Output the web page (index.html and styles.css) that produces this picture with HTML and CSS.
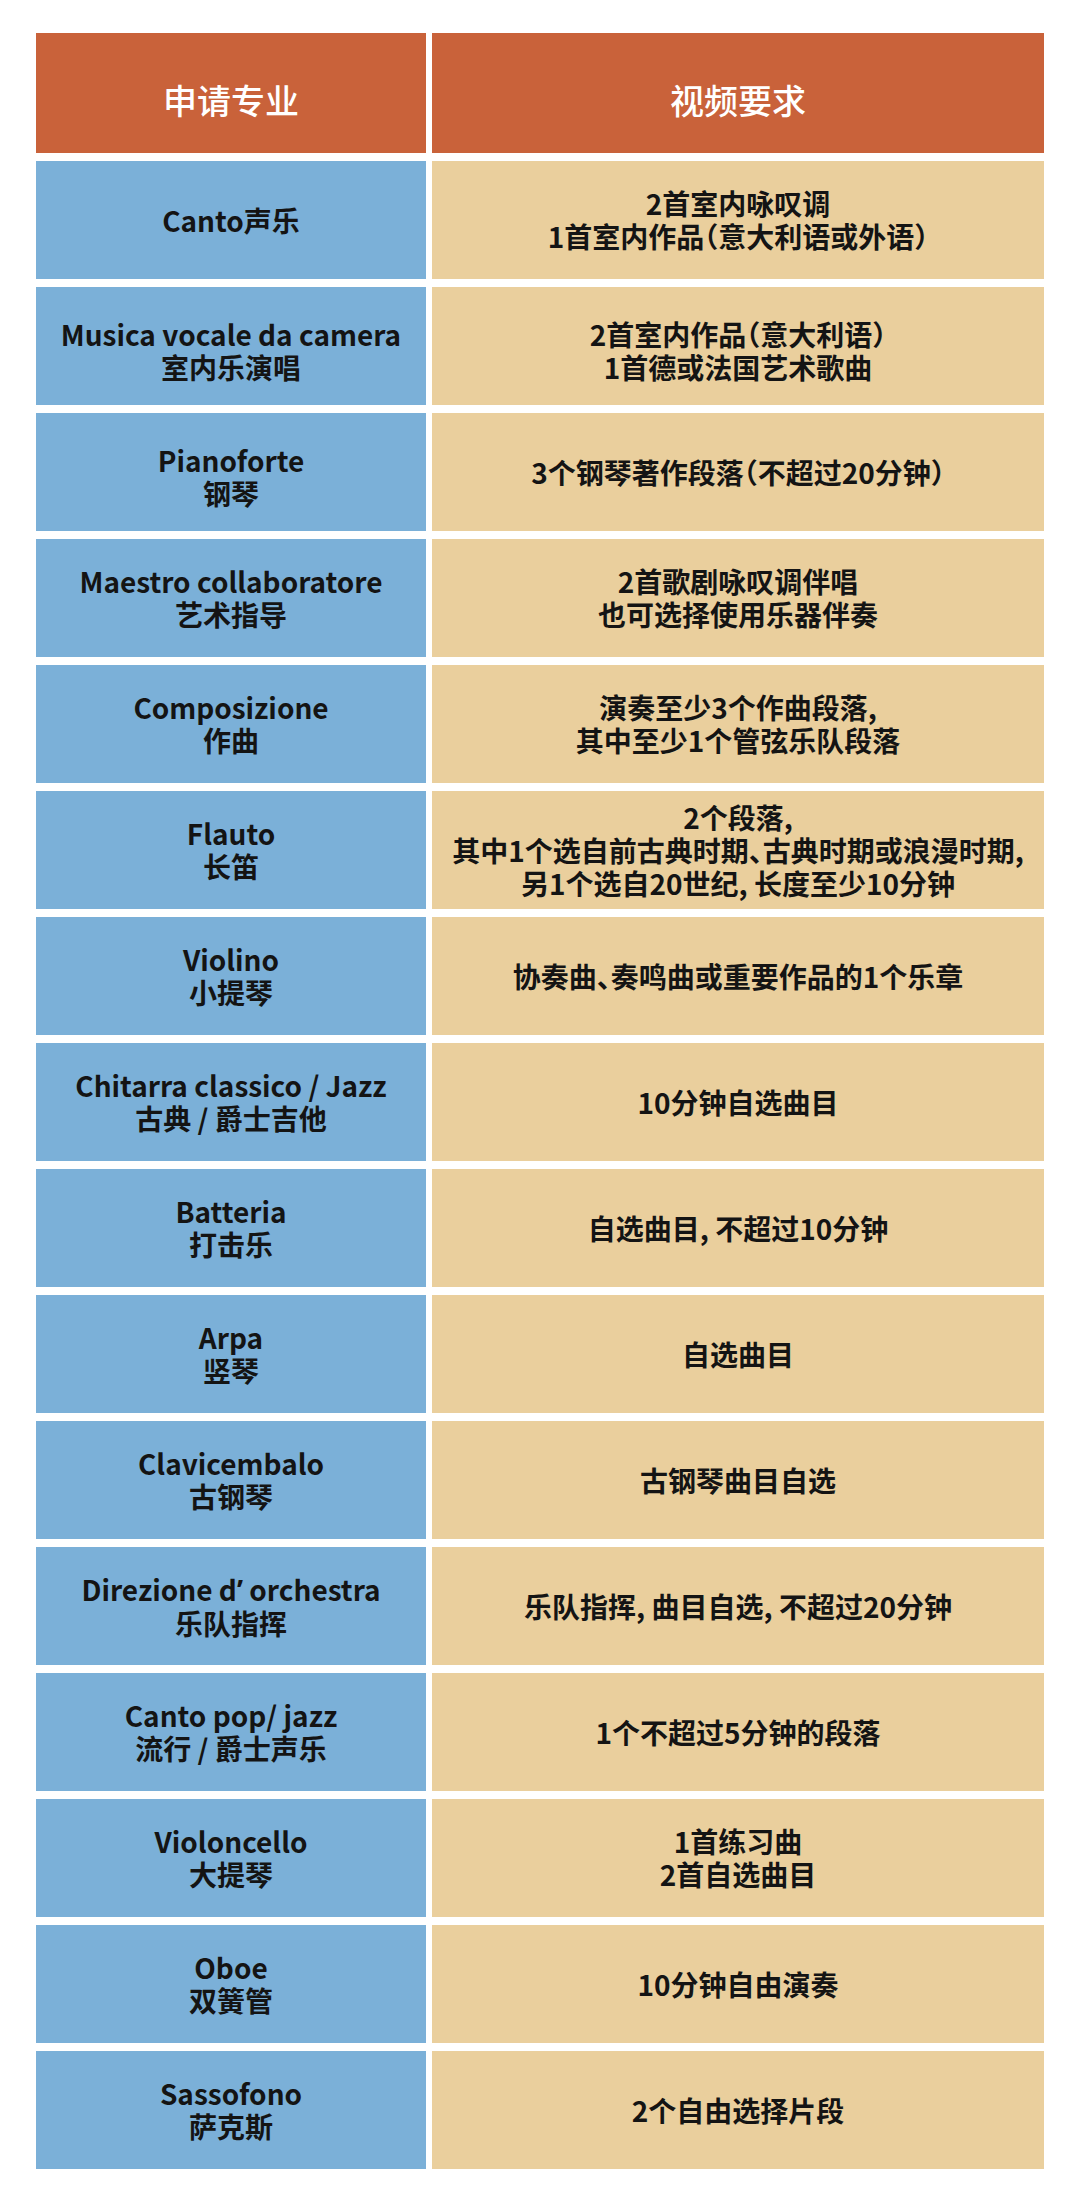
FILE: index.html
```html
<!DOCTYPE html>
<html lang="zh-CN">
<head>
<meta charset="utf-8">
<title>申请专业 视频要求</title>
<link rel="stylesheet" href="styles.css">
</head>
<body>
<div class="table">
  <div class="cell head"><p class="txt">申请专业</p></div>
  <div class="cell head"><p class="txt">视频要求</p></div>

  <div class="cell major"><p class="txt">Canto声乐</p></div>
  <div class="cell req"><p class="txt">2首室内咏叹调<br>1首室内作品（意大利语或外语）</p></div>

  <div class="cell major low"><p class="txt">Musica vocale da camera<br>室内乐演唱</p></div>
  <div class="cell req low"><p class="txt">2首室内作品（意大利语）<br>1首德或法国艺术歌曲</p></div>

  <div class="cell major low"><p class="txt">Pianoforte<br>钢琴</p></div>
  <div class="cell req"><p class="txt">3个钢琴著作段落（不超过20分钟）</p></div>

  <div class="cell major"><p class="txt">Maestro collaboratore<br>艺术指导</p></div>
  <div class="cell req"><p class="txt">2首歌剧咏叹调伴唱<br>也可选择使用乐器伴奏</p></div>

  <div class="cell major"><p class="txt">Composizione<br>作曲</p></div>
  <div class="cell req"><p class="txt">演奏至少3个作曲段落,<br>其中至少1个管弦乐队段落</p></div>

  <div class="cell major"><p class="txt">Flauto<br>长笛</p></div>
  <div class="cell req"><p class="txt">2个段落,<br>其中1个选自前古典时期、古典时期或浪漫时期,<br>另1个选自20世纪, 长度至少10分钟</p></div>

  <div class="cell major"><p class="txt">Violino<br>小提琴</p></div>
  <div class="cell req"><p class="txt">协奏曲、奏鸣曲或重要作品的1个乐章</p></div>

  <div class="cell major"><p class="txt">Chitarra classico / Jazz<br>古典 / 爵士吉他</p></div>
  <div class="cell req"><p class="txt">10分钟自选曲目</p></div>

  <div class="cell major"><p class="txt">Batteria<br>打击乐</p></div>
  <div class="cell req"><p class="txt">自选曲目, 不超过10分钟</p></div>

  <div class="cell major"><p class="txt">Arpa<br>竖琴</p></div>
  <div class="cell req"><p class="txt">自选曲目</p></div>

  <div class="cell major"><p class="txt">Clavicembalo<br>古钢琴</p></div>
  <div class="cell req"><p class="txt">古钢琴曲目自选</p></div>

  <div class="cell major"><p class="txt">Direzione d<span class="apos">’</span> orchestra<br>乐队指挥</p></div>
  <div class="cell req"><p class="txt">乐队指挥, 曲目自选, 不超过20分钟</p></div>

  <div class="cell major"><p class="txt">Canto pop/ jazz<br>流行 / 爵士声乐</p></div>
  <div class="cell req"><p class="txt">1个不超过5分钟的段落</p></div>

  <div class="cell major"><p class="txt">Violoncello<br>大提琴</p></div>
  <div class="cell req"><p class="txt">1首练习曲<br>2首自选曲目</p></div>

  <div class="cell major"><p class="txt">Oboe<br>双簧管</p></div>
  <div class="cell req"><p class="txt">10分钟自由演奏</p></div>

  <div class="cell major"><p class="txt">Sassofono<br>萨克斯</p></div>
  <div class="cell req"><p class="txt">2个自由选择片段</p></div>
</div>
</body>
</html>
```

FILE: styles.css
```css
html, body {
  margin: 0;
  padding: 0;
  background: #ffffff;
}

body {
  font-family: "Noto Sans CJK SC", "Noto Sans", sans-serif;
  font-feature-settings: "halt";
}

.table {
  display: grid;
  grid-template-columns: 390px 612px;
  grid-template-rows: 120px;
  grid-auto-rows: 118px;
  column-gap: 6px;
  row-gap: 8px;
  padding: 33px 36px 0 36px;
}

.cell {
  display: flex;
  align-items: center;
  justify-content: center;
  text-align: center;
  font-size: 28px;
  line-height: 33px;
  font-weight: 700;
  color: #141414;
  box-sizing: border-box;
}

.txt {
  margin: 0;
}

.head {
  background: #c9623a;
  color: #ffffff;
  font-size: 34px;
  font-weight: 500;
  padding-top: 12px;
}

.major {
  background: #7bb0d8;
}

.req {
  background: #eacf9d;
}

.low {
  padding-top: 10px;
}

.apos {
  font-family: "Noto Sans", sans-serif;
}
```
